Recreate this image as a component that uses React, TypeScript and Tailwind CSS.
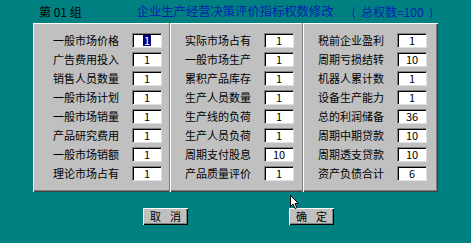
import React from "react";

const cols: { label: string; value: string }[][] = [
  [
    { label: "一般市场价格", value: "1" },
    { label: "广告费用投入", value: "1" },
    { label: "销售人员数量", value: "1" },
    { label: "一般市场计划", value: "1" },
    { label: "一般市场销量", value: "1" },
    { label: "产品研究费用", value: "1" },
    { label: "一般市场销额", value: "1" },
    { label: "理论市场占有", value: "1" },
  ],
  [
    { label: "实际市场占有", value: "1" },
    { label: "一般市场生产", value: "1" },
    { label: "累积产品库存", value: "1" },
    { label: "生产人员数量", value: "1" },
    { label: "生产线的负荷", value: "1" },
    { label: "生产人员负荷", value: "1" },
    { label: "周期支付股息", value: "10" },
    { label: "产品质量评价", value: "1" },
  ],
  [
    { label: "税前企业盈利", value: "1" },
    { label: "周期亏损结转", value: "10" },
    { label: "机器人累计数", value: "1" },
    { label: "设备生产能力", value: "1" },
    { label: "总的利润储备", value: "36" },
    { label: "周期中期贷款", value: "10" },
    { label: "周期透支贷款", value: "10" },
    { label: "资产负债合计", value: "6" },
  ],
];

const font = "font-['SimSun','Noto_Sans_CJK_SC',sans-serif]";

const Field = ({ value, selected }: { value: string; selected?: boolean }) => (
  <div className="w-[30px] h-[15px] bg-white border-t-[#808080] border-l-[#808080] border-b-[#dfdfdf] border-r-[#dfdfdf] border shadow-[inset_1px_1px_0_#000] flex items-center justify-center text-[11px] leading-none text-black">
    {selected ? <span className="bg-[#000080] text-white px-[1px] h-[11px] flex items-center">{value}</span> : value}
  </div>
);

const Button = ({ a, b }: { a: string; b: string }) => (
  <button className="w-[45px] h-[17px] bg-[#c0c0c0] text-[11px] leading-none text-black flex items-center justify-center gap-[9px] shadow-[inset_1px_1px_0_#fff,inset_-1px_-1px_0_#000,inset_-2px_-2px_0_#808080]">
    <span>{a}</span>
    <span>{b}</span>
  </button>
);

export default function App() {
  return (
    <div className={`relative w-[471px] h-[243px] bg-[#008080] ${font}`}>
      {/* header */}
      <div className="h-[23px] flex items-center leading-none">
        <span className="ml-[39px] text-black text-[12px]">第 01 组</span>
        <span className="ml-[55px] text-[#0024b0] text-[12.3px]">企业生产经营决策评价指标权数修改</span>
        <span className="ml-[18px] text-[#0024b0] text-[12px] whitespace-pre">(  总权数=100  )</span>
      </div>

      {/* panel */}
      <div className="ml-[33px] w-[405px] h-[169px] bg-[#c0c0c0] flex shadow-[inset_1px_1px_0_#fff,inset_-1px_-1px_0_#404040,inset_-2px_-2px_0_#808080]">
        {cols.map((col, ci) => (
          <div
            key={ci}
            className={`flex flex-col gap-[4px] pt-[10px] ${
              ci === 0 ? "w-[136px] pl-[20px]" : "pl-[15px] border-l border-[#808080] shadow-[inset_1px_0_0_#fff]"
            } ${ci === 1 ? "w-[133px]" : ""} ${ci === 2 ? "w-[134px]" : ""}`}
          >
            {col.map((row, ri) => (
              <div key={ri} className="flex items-center gap-[13px] h-[15px]">
                <span className="w-[66px] text-[11px] leading-none text-black whitespace-nowrap">{row.label}</span>
                <Field value={row.value} selected={ci === 0 && ri === 0} />
              </div>
            ))}
          </div>
        ))}
      </div>

      {/* buttons */}
      <div className="flex mt-[16px] ml-[143px] gap-[101px]">
        <Button a="取" b="消" />
        <Button a="确" b="定" />
      </div>

      {/* mouse pointer */}
      <svg className="absolute left-[290px] top-[195px]" width="10" height="15" viewBox="0 0 10 15">
        <path d="M0.5 0.5 L0.5 11.5 L3 9 L5 13.5 L6.8 12.7 L5 8.5 L8.5 8.5 Z" fill="#fff" stroke="#000" strokeWidth="1" />
      </svg>
    </div>
  );
}
